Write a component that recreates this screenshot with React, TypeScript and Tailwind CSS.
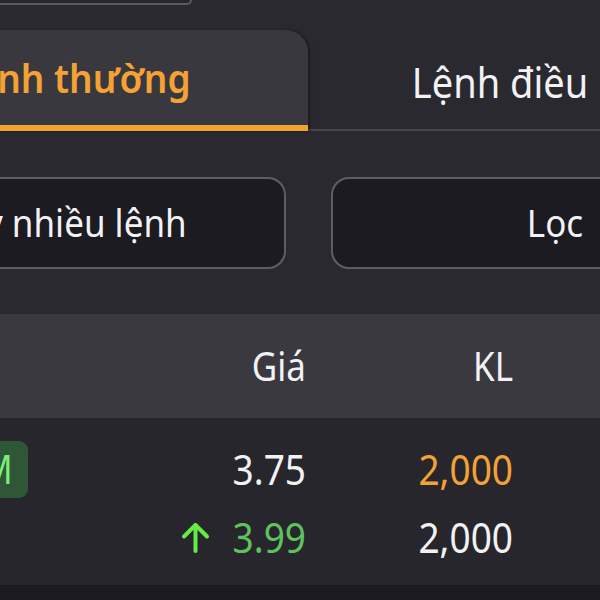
import { useState } from 'react';

const font = { fontFamily: '"Noto Sans", "Open Sans", sans-serif' };

function ArrowUpIcon() {
  return (
    <svg width="29" height="32" viewBox="0 0 29 32" fill="none" stroke="#66ea46" strokeWidth={4} strokeLinecap="round" strokeLinejoin="round">
      <path d="M14.5 30V4" />
      <path d="M3 15.5L14.5 4 26 15.5" />
    </svg>
  );
}

export default function App() {
  const [tab, setTab] = useState(0);

  const rows = [
    { badge: 'M', price: '3.75', up: false, vol: '2,000', volHighlight: true },
    { badge: '', price: '3.99', up: true, vol: '2,000', volHighlight: false },
  ];

  return (
    <div className="w-[600px] h-[600px] overflow-hidden bg-[#2a2930] text-[#f2f2f4]" style={font}>
      {/* phần trên bị cắt */}
      <div className="h-[30px]">
        <div className="h-[5px] w-[192px] bg-[#27262c] border-b-2 border-r-2 border-[#5c5b62] rounded-br-[18px]" />
      </div>

      <div className="ml-[-176px] w-[969px]">
        {/* tabs */}
        <div className="flex px-[28px] h-[101px] border-b-2 border-[#47464d]">
          {['Lệnh thường', 'Lệnh điều kiện'].map((label, i) => (
            <button
              key={label}
              onClick={() => setTab(i)}
              className={`w-[456px] h-[101px] flex items-center justify-center ${
                tab === i
                  ? 'bg-[#39383f] rounded-tr-[22px] border-b-[6px] border-[#f2a233] text-[#f4a236] font-semibold text-[37px] pr-[14px] shadow-[2px_0_3px_rgba(0,0,0,0.35)]'
                  : 'text-[#f2f2f4] text-[38px] pt-[4px] pl-[13px]'
              }`}
            >
              <span className="inline-block scale-y-[1.08]">{label}</span>
            </button>
          ))}
        </div>

        {/* buttons */}
        <div className="flex gap-[45px] px-[14px] pt-[46px] pb-[45px]">
          <button className="w-[448px] h-[92px] rounded-[18px] border-2 border-[#5e5d65] bg-[#1c1b21] text-[35px] text-[#f2f2f4]">
            <span className="inline-block scale-y-[1.1]">Hủy nhiều lệnh</span>
          </button>
          <button className="w-[448px] h-[92px] rounded-[18px] border-2 border-[#5e5d65] bg-[#1c1b21] text-[35px] text-[#f2f2f4]">
            <span className="inline-block scale-y-[1.1]">Lọc</span>
          </button>
        </div>
      </div>

      {/* bảng */}
      <div className="flex items-center h-[104px] bg-[#3a3940] text-[35px]">
        <div className="w-[306px] text-right">
          <span className="inline-block scale-y-[1.12]">Giá</span>
        </div>
        <div className="w-[207px] text-right">
          <span className="inline-block scale-y-[1.12]">KL</span>
        </div>
      </div>

      <div className="bg-[#27262c] h-[167px] pt-[17px]">
        {rows.map((r, i) => (
          <div key={i} className="flex items-center h-[68px] text-[37px]">
            <div className="w-[306px] flex items-center">
              {r.badge ? (
                <span className="ml-[-33px] h-[57px] flex items-center pl-[14px] pr-[15px] rounded-[9px] bg-[#2f5636] text-[#7cec7c] text-[35px]">
                  <span className="inline-block scale-y-[1.12]">{r.badge}</span>
                </span>
              ) : null}
              <div className="flex-1 flex items-center justify-end gap-[23px]">
                {r.up && <ArrowUpIcon />}
                <span className={`inline-block scale-y-[1.14] ${r.up ? 'text-[#5ec35e]' : 'text-[#f2f2f4]'}`}>{r.price}</span>
              </div>
            </div>
            <div className={`w-[207px] text-right ${r.volHighlight ? 'text-[#f4a236]' : 'text-[#f2f2f4]'}`}>
              <span className="inline-block scale-y-[1.14]">{r.vol}</span>
            </div>
          </div>
        ))}
      </div>

      <div className="h-[15px] bg-[#1c1b21]" />
    </div>
  );
}
